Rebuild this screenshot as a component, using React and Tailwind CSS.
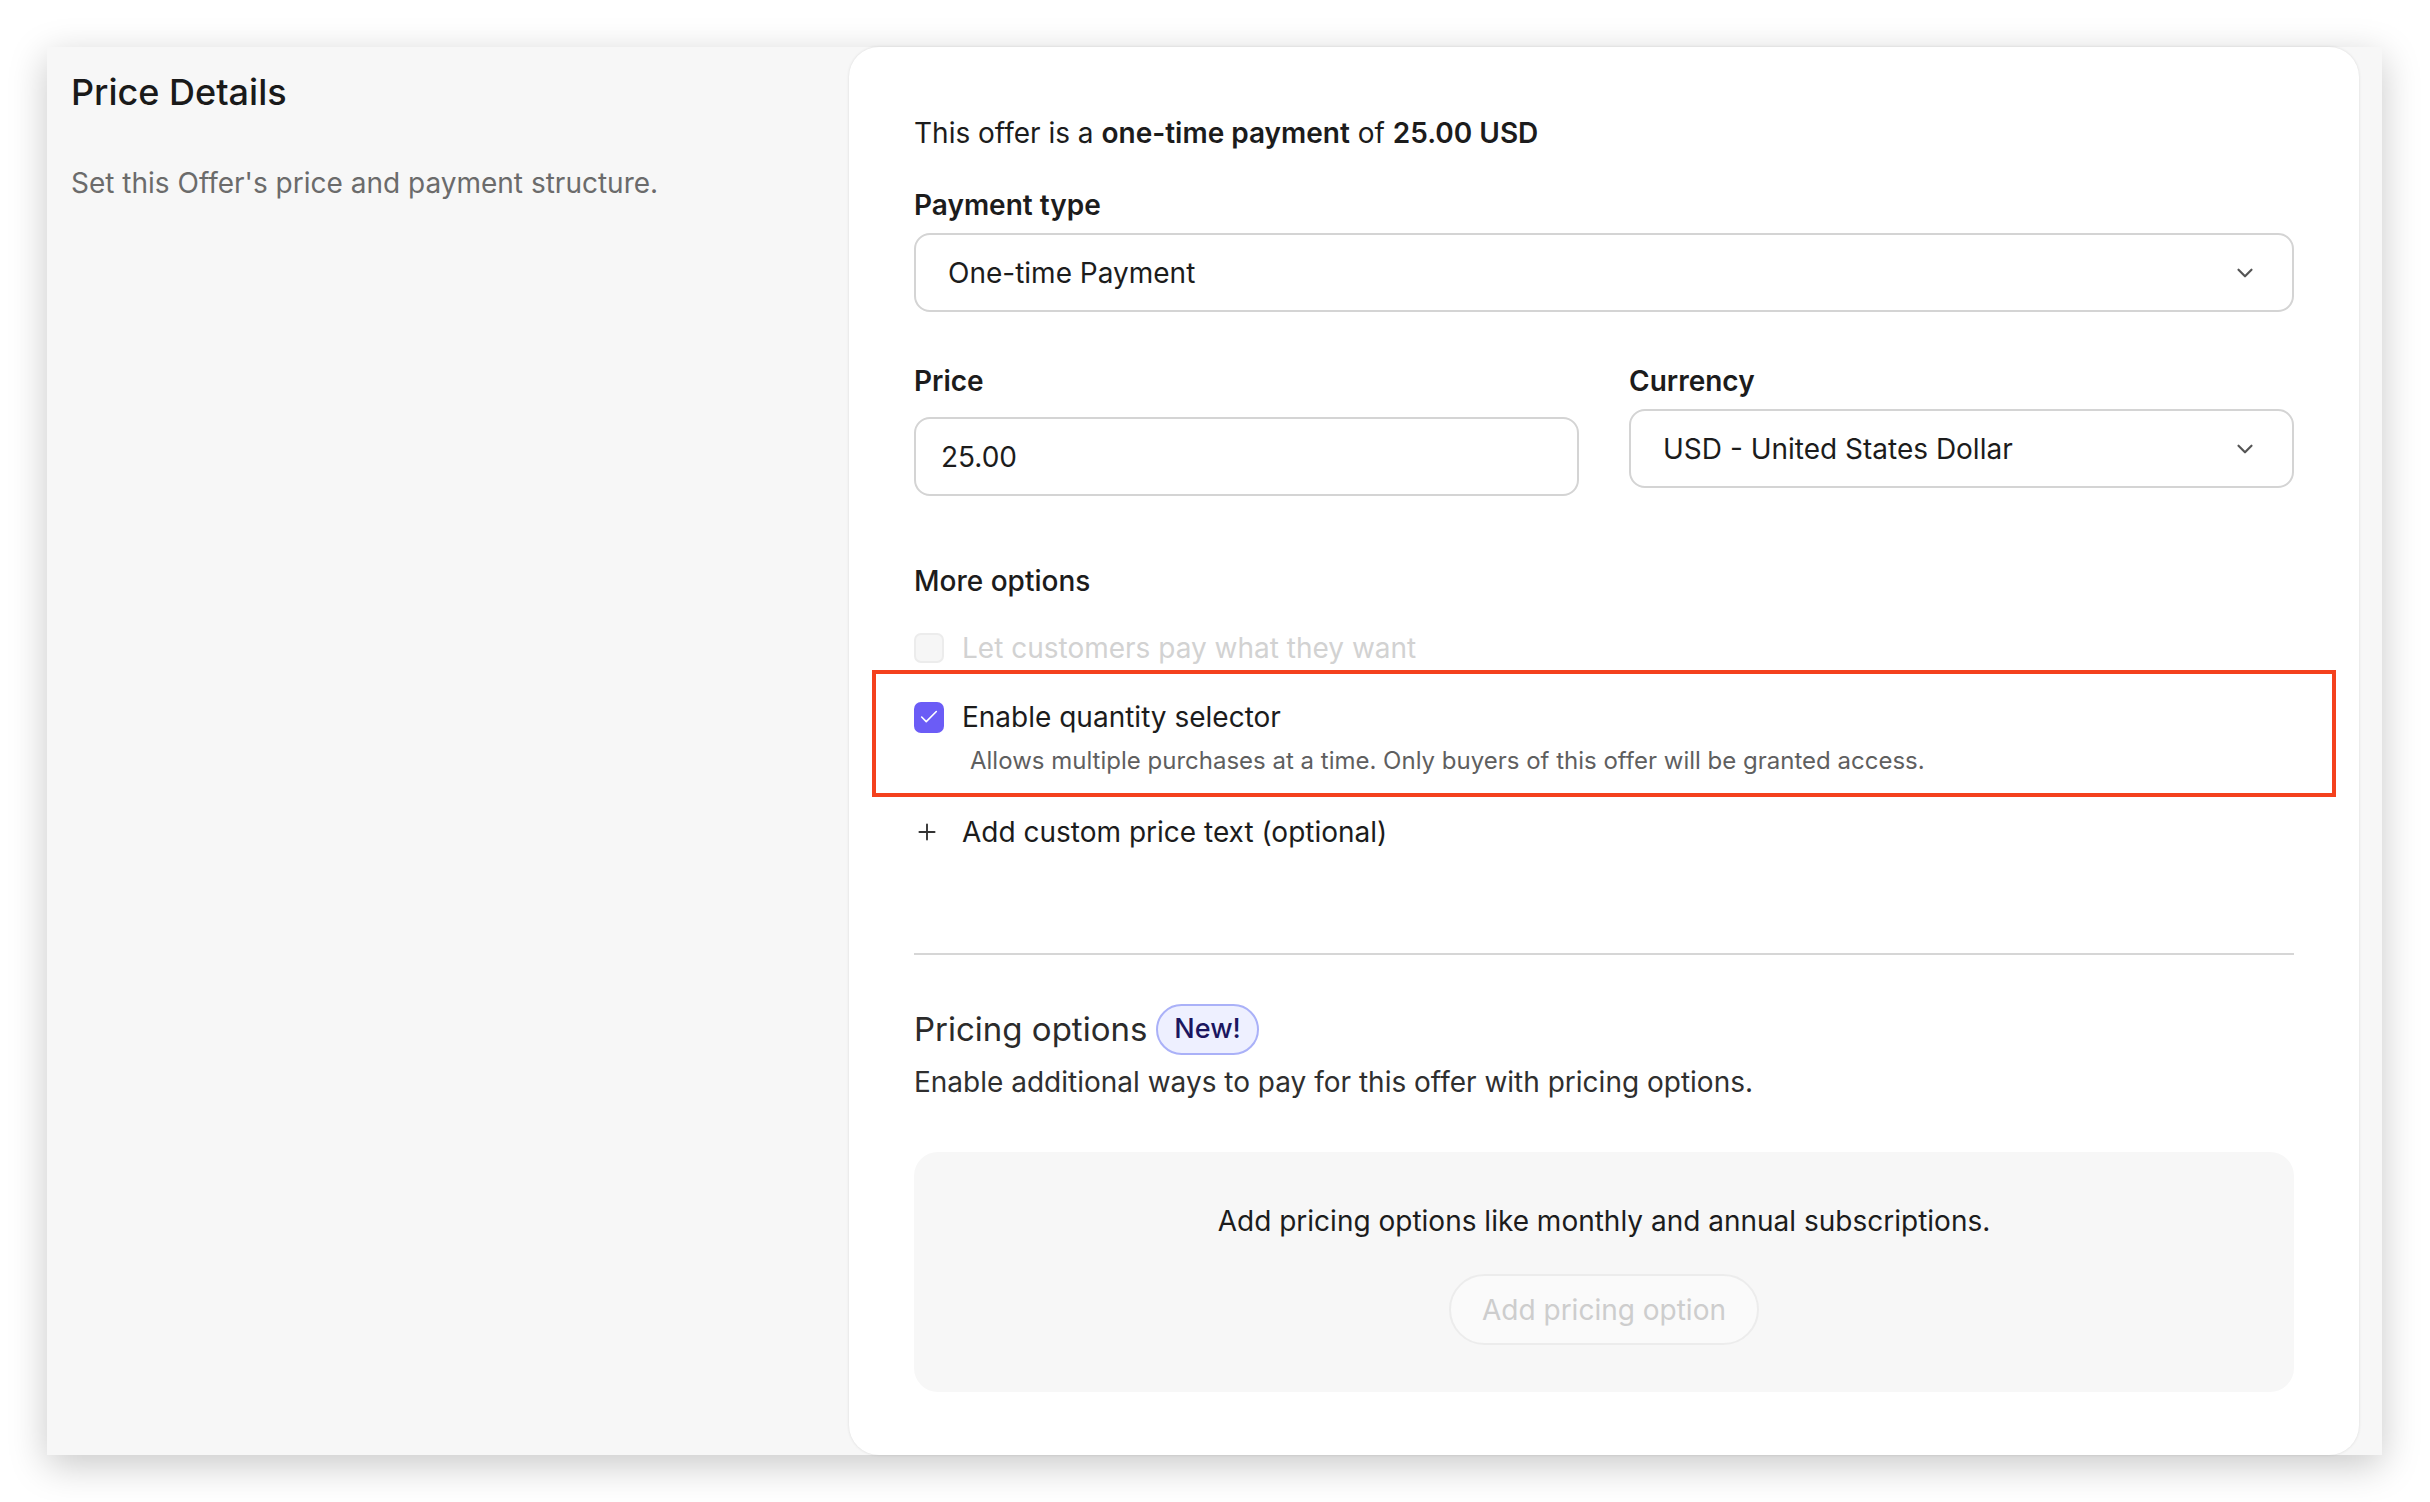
import { Check, ChevronDown, Plus } from 'lucide-react';

function Select({ value, className = '' }) {
  return (
    <div className={`flex items-center justify-between h-[79px] border-2 border-[#d4d4d4] rounded-[16px] bg-white pl-[32px] pr-[34px] ${className}`}>
      <span className="text-[28px] text-[#1c1c1c]">{value}</span>
      <ChevronDown className="w-[26px] h-[26px] text-[#555]" strokeWidth={2} />
    </div>
  );
}

export default function App() {
  return (
    <div className="min-h-screen bg-white p-[47px] font-['Inter',sans-serif] text-[#1c1c1c]">
      <div className="flex w-[2335px] h-[1408px] bg-[#f7f7f7] shadow-[0_10px_36px_rgba(0,0,0,0.22)]">
        {/* left column */}
        <div className="w-[802px] pl-[24px] pt-[24px]">
          <h1 className="text-[36px] leading-[42px] font-medium text-[#1a1a1a]">Price Details</h1>
          <p className="mt-[52px] text-[28px] leading-[36px] text-[#6b6b6b]">Set this Offer's price and payment structure.</p>
        </div>

        {/* card */}
        <div className="w-[1510px] bg-white rounded-[30px] shadow-[0_0_3px_rgba(0,0,0,0.12)] pl-[65px] pr-[65px] pt-[68px]">
          <p className="text-[28px] leading-[36px]">
            This offer is a <span className="font-semibold">one-time payment</span> of <span className="font-semibold">25.00 USD</span>
          </p>

          <div className="mt-[36px] text-[28px] leading-[36px] font-semibold">Payment type</div>
          <Select value="One-time Payment" className="mt-[10px]" />

          <div className="grid grid-cols-2 gap-[50px] mt-[51px]">
            <div>
              <div className="text-[28px] leading-[36px] font-semibold">Price</div>
              <div className="mt-[18px] h-[79px] border-2 border-[#d4d4d4] rounded-[16px] flex items-center pl-[25px] text-[28px]">25.00</div>
            </div>
            <div>
              <div className="text-[28px] leading-[36px] font-semibold">Currency</div>
              <Select value="USD - United States Dollar" className="mt-[10px]" />
            </div>
          </div>

          <div className="mt-[67px] text-[28px] leading-[36px] font-medium">More options</div>

          <div className="mt-[31px] flex items-center gap-[18px] h-[36px]">
            <div className="w-[30px] h-[30px] rounded-[7px] border-2 border-[#ececec] bg-[#f6f6f6]" />
            <span className="text-[28px] text-[#d2d2d2]">Let customers pay what they want</span>
          </div>

          <div className="mt-[4px] -mx-[42px] border-4 border-[#f4411d] pl-[38px] pt-[25px] pb-[17px]">
            <div className="flex items-center gap-[18px] h-[36px]">
              <div className="w-[30px] h-[31px] rounded-[7px] bg-[#6b5cf6] flex items-center justify-center">
                <Check className="w-[22px] h-[22px] text-white" strokeWidth={1.75} />
              </div>
              <span className="text-[28px]">Enable quantity selector</span>
            </div>
            <p className="mt-[11px] pl-[56px] text-[24px] leading-[30px] text-[#5f5f5f]">
              Allows multiple purchases at a time. Only buyers of this offer will be granted access.
            </p>
          </div>

          <div className="mt-[17px] flex items-center gap-[22px] h-[36px]">
            <Plus className="w-[26px] h-[26px] text-[#333]" strokeWidth={1.75} />
            <span className="text-[28px]">Add custom price text (optional)</span>
          </div>

          <div className="mt-[103px] h-[2px] bg-[#d6d6d6]" />

          <div className="mt-[49px] flex items-center gap-[9px]">
            <span className="text-[33px] text-[#2b2b2b]">Pricing options</span>
            <span className="h-[51px] px-[16px] flex items-center rounded-full bg-[#eef0ff] border-2 border-[#aab1f8] text-[27px] font-medium text-[#1b1660]">New!</span>
          </div>
          <p className="mt-[9px] text-[28px] leading-[36px] text-[#2f2f2f]">Enable additional ways to pay for this offer with pricing options.</p>

          <div className="mt-[52px] bg-[#f7f7f7] rounded-[24px] pt-[51px] pb-[47px] flex flex-col items-center">
            <p className="text-[28px] leading-[36px] text-[#1c1c1c]">Add pricing options like monthly and annual subscriptions.</p>
            <button className="mt-[35px] h-[71px] px-[31px] rounded-full bg-[#fafafa] border-2 border-[#ececec] text-[28px] text-[#cdcdcd]">Add pricing option</button>
          </div>
        </div>
      </div>
    </div>
  );
}
